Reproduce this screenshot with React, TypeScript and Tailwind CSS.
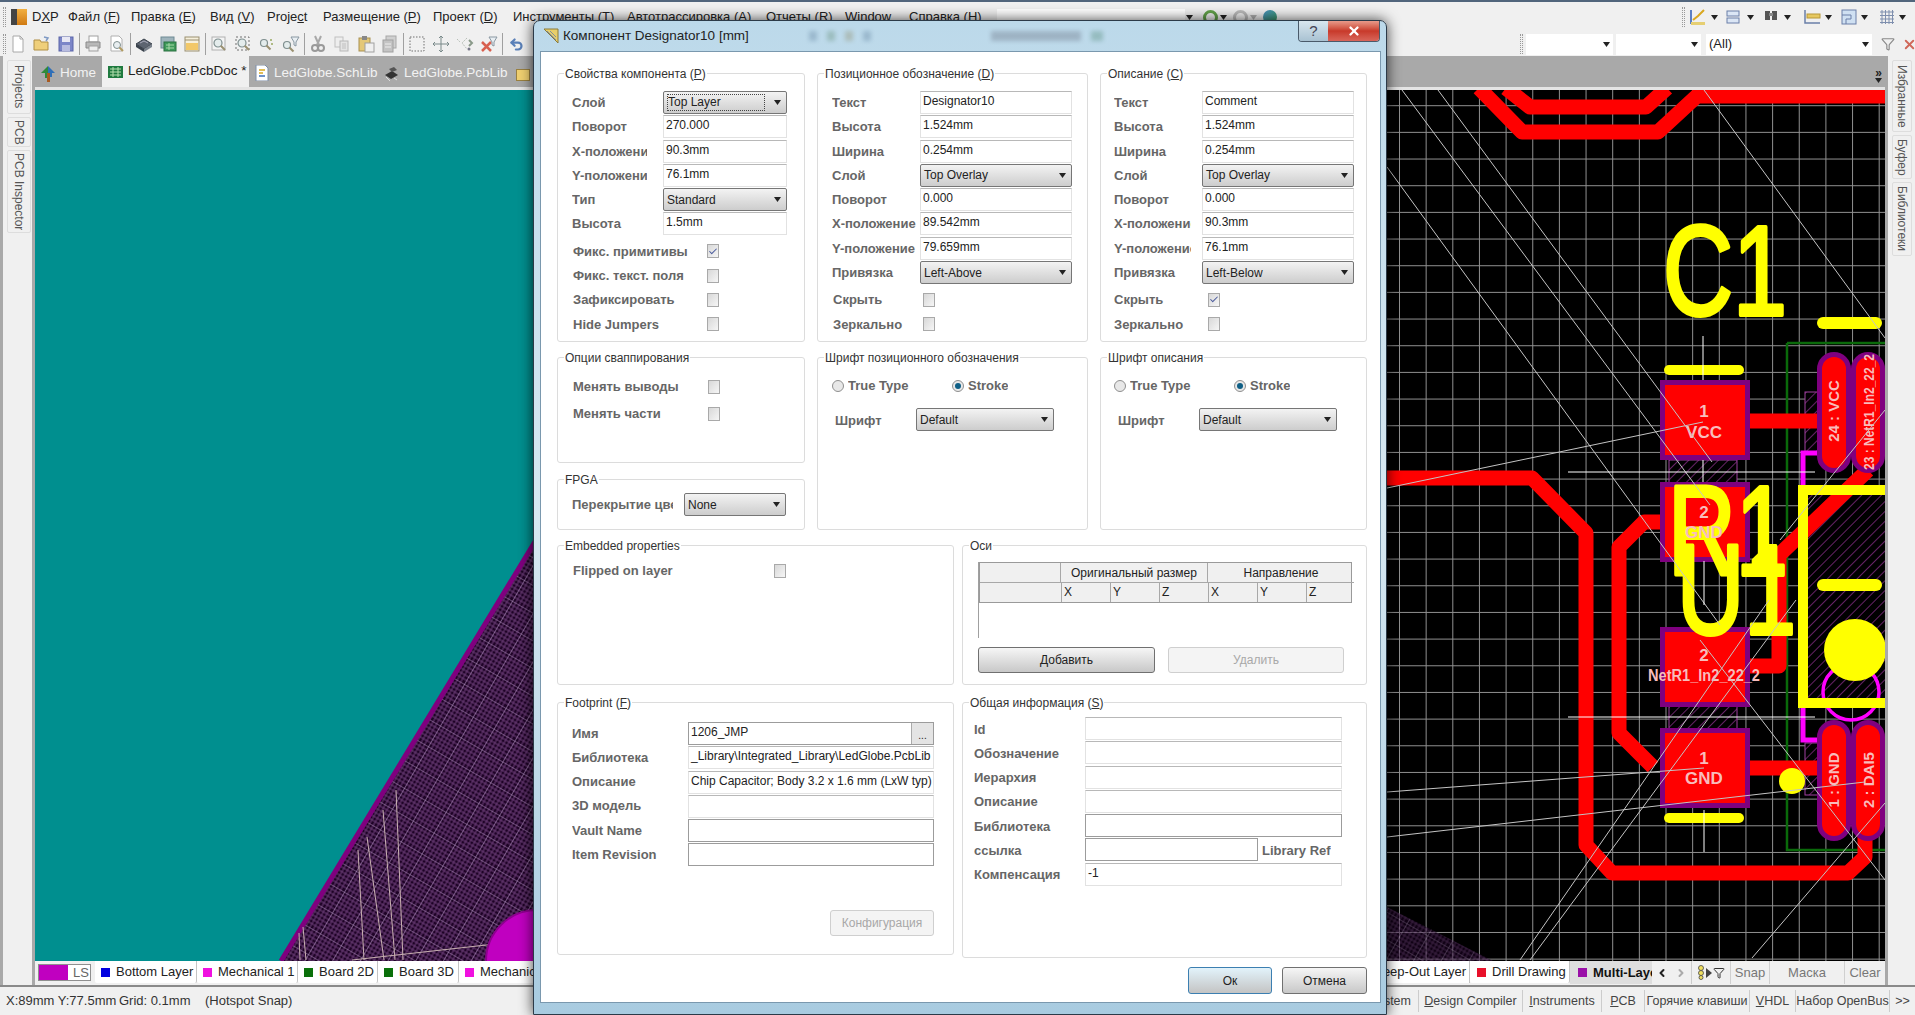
import React from 'react';
import { Check, ChevronRight, ChevronLeft, Filter, Undo2, X } from 'lucide-react';

const Arrow = ({ className = '' }: { className?: string }) => (
  <svg width="7" height="5" viewBox="0 0 7 5" className={className}>
    <polygon points="0,0 7,0 3.5,5" fill="#222" />
  </svg>
);

const Grip = () => <div className="h-[20px] w-[3px] shrink-0 border-x border-dotted border-[#999]" />;
const Sep = () => <div className="mx-px h-[22px] w-px shrink-0 bg-[#a0a0a0]" />;

const Tool = ({ children }: { children: React.ReactNode }) => (
  <div className="flex h-[22px] w-[24px] shrink-0 items-center justify-center">
    <svg width="18" height="18" viewBox="0 0 18 18">{children}</svg>
  </div>
);

const Lens = ({ x = 8, y = 8, r = 4 }: { x?: number; y?: number; r?: number }) => (
  <>
    <circle cx={x} cy={y} r={r} fill="#e4ecec" stroke="#7f8f8f" strokeWidth="1.2" />
    <path d={`M${x + r * 0.7} ${y + r * 0.7}L${x + r + 3} ${y + r + 3}`} stroke="#9a9070" strokeWidth="2" />
  </>
);

const Funnel = ({ x = 9 }: { x?: number }) => (
  <polygon points={`${x},2 ${x + 8},2 ${x + 5},7 ${x + 5},11 ${x + 3},10 ${x + 3},7`} fill="#e8eef2" stroke="#8a98a2" strokeWidth="1" />
);

const menu = [
  { w: 'w-[36px]', t: 'D', u: 'X', r: 'P' },
  { w: 'w-[63px]', t: 'Файл (', u: 'F', r: ')' },
  { w: 'w-[79px]', t: 'Правка (', u: 'E', r: ')' },
  { w: 'w-[57px]', t: 'Вид (', u: 'V', r: ')' },
  { w: 'w-[56px]', t: 'Proje', u: 'c', r: 't' },
  { w: 'w-[110px]', t: 'Размещение (', u: 'P', r: ')' },
  { w: 'w-[80px]', t: 'Проект (', u: 'D', r: ')' },
  { w: 'w-[114px]', t: 'Инструменты (', u: 'T', r: ')' },
  { w: 'w-[139px]', t: 'Автотрассировка (', u: 'A', r: ')' },
  { w: 'w-[79px]', t: 'Отчеты (', u: 'R', r: ')' },
  { w: 'w-[64px]', t: 'Window', u: '', r: '' },
  { w: 'w-[88px]', t: 'Справка (', u: 'H', r: ')' },
];

function PcbCanvas() {
  const vLines = Array.from({ length: 19 }, (_, i) => 1399.5 + i * 26.65);
  const hLines = Array.from({ length: 33 }, (_, i) => 105.7 + i * 26.67);
  const thin = [
    [1402, 90, 1710, 505], [1438, 90, 1712, 462], [1704, 90, 1885, 338], [1387, 167, 1720, 625],
    [1387, 488, 1703, 422], [1387, 792, 1704, 768], [1387, 837, 1865, 782], [1520, 960, 1769, 600],
    [1530, 960, 1796, 600], [1752, 958, 1885, 803], [1700, 640, 1885, 880], [1885, 410, 1780, 540],
  ];
  const leftThin = [
    [396, 790, 403, 960], [383, 810, 395, 960], [367, 837, 384, 960], [358, 850, 364, 960],
    [299, 933, 300, 960], [303, 927, 306, 960], [352, 960, 531, 940],
  ];
  return (
    <svg width="1850" height="871" viewBox="35 90 1850 871" className="block">
      <defs>
        <pattern id="board" width="24" height="24" patternUnits="userSpaceOnUse" patternTransform="rotate(30)">
          <rect width="24" height="24" fill="#1e0226" />
          <path d="M0 4H24M0 8H24M0 12H24M0 16H24M0 20H24M4 0V24M8 0V24M12 0V24M16 0V24M20 0V24" stroke="#6d3f7a" strokeWidth="1" />
          <path d="M0 0H24M0 0V24" stroke="#b18fc0" strokeWidth="1.2" />
        </pattern>
        <pattern id="hatch" width="7" height="7" patternUnits="userSpaceOnUse" patternTransform="rotate(45)">
          <rect width="7" height="7" fill="#000" />
          <path d="M0 0V7" stroke="#7f2a7f" strokeWidth="1.6" />
        </pattern>
      </defs>
      {/* left part, teal background and the board edge */}
      <rect x="35" y="90" width="520" height="871" fill="#008f8f" />
      <polygon points="281,961 536,540 536,961" fill="url(#board)" />
      <line x1="281" y1="961" x2="536" y2="540" stroke="#7f007f" strokeWidth="5" />
      {leftThin.map((l, i) => (
        <line key={i} x1={l[0]} y1={l[1]} x2={l[2]} y2={l[3]} stroke="#c8b0b0" strokeWidth="1" />
      ))}
      <circle cx="537" cy="961" r="51" fill="#c000c0" stroke="#8f008f" strokeWidth="2" />

      {/* right part, black with grid */}
      <rect x="1380" y="90" width="505" height="871" fill="#000" />
      {vLines.map((x) => (
        <line key={x} x1={x} y1="90" x2={x} y2="961" stroke="#909090" strokeWidth="1" />
      ))}
      {hLines.map((y) => (
        <line key={y} x1="1380" y1={y} x2="1885" y2={y} stroke="#909090" strokeWidth="1" />
      ))}
      <polygon points="1387,907 1493,961 1387,961" fill="url(#board)" opacity="0.55" />

      {/* hatched courtyards */}
      <rect x="1807" y="490" width="78" height="213" fill="url(#hatch)" />
      <rect x="1805" y="392" width="14" height="61" fill="url(#hatch)" stroke="#a040a0" />
      <rect x="1805" y="743" width="14" height="52" fill="url(#hatch)" stroke="#a040a0" />
      <rect x="1669" y="460" width="68" height="24" fill="url(#hatch)" stroke="#a040a0" />
      <rect x="1669" y="705" width="68" height="24" fill="url(#hatch)" stroke="#a040a0" />

      <path d="M1787 343H1885M1787 343V850H1885" fill="none" stroke="#0a6a0a" strokeWidth="2.5" />
      <path d="M1817 453H1803V740H1817" fill="none" stroke="#ff00ff" strokeWidth="5" />
      <circle cx="1851" cy="692" r="28" fill="none" stroke="#ff00ff" strokeWidth="3.5" />

      {/* copper */}
      <g fill="none" stroke="#ff0000" strokeWidth="15" strokeLinejoin="round">
        <path d="M1885 96H1697L1658 132H1522L1479 88" />
        <path d="M1506 88L1530 107H1646L1667 88" />
        <path d="M1380 478H1532L1586 533V845L1612 873H1848L1865 857V835" />
        <path d="M1663 522H1644L1619 547V733L1653 767" />
        <path d="M1750 666H1779V555L1868 470" />
        <path d="M1750 421H1825" />
        <path d="M1750 768H1825" />
      </g>
      {[380, 482, 627, 728].map((y) => (
        <rect key={y} x="1662.5" y={y + 2.5} width="85" height="75" fill="#ff0000" stroke="#7f007f" strokeWidth="5" />
      ))}
      {[
        [1817, 352], [1851, 352], [1817, 720], [1851, 720],
      ].map((p, i) => (
        <rect key={i} x={p[0] + 2.5} y={p[1] + 2.5} width="29" height="116" rx="14.5" fill="#ff0000" stroke="#7f007f" strokeWidth="5" />
      ))}

      {/* pad names */}
      <g fill="#f8bcbc" fontFamily="'Liberation Sans',sans-serif" fontWeight="700" textAnchor="middle">
        <text x="1704" y="417" fontSize="17">1</text>
        <text x="1704" y="438" fontSize="17">VCC</text>
        <text x="1704" y="661" fontSize="17">2</text>
        <text x="1704" y="681" fontSize="16" textLength="112" lengthAdjust="spacingAndGlyphs">NetR1_In2_22_2</text>
        <text x="1704" y="764" fontSize="17">1</text>
        <text x="1704" y="784" fontSize="17">GND</text>
        <text transform="translate(1839 411) rotate(-90)" fontSize="15">24 : VCC</text>
        <text transform="translate(1874 412) rotate(-90)" fontSize="14" textLength="116" lengthAdjust="spacingAndGlyphs">23 : NetR1_In2_22_2</text>
        <text transform="translate(1839 780) rotate(-90)" fontSize="15">1 : GND</text>
        <text transform="translate(1874 780) rotate(-90)" fontSize="15">2 : DAI5</text>
      </g>

      {/* overlay */}
      <g fill="none" stroke="#ffff00" strokeLinecap="round">
        <path d="M1669 370H1739" strokeWidth="10" />
        <path d="M1669 818H1739" strokeWidth="10" />
        <path d="M1823 323H1876" strokeWidth="12" />
        <path d="M1823 585H1876" strokeWidth="12" />
        <path d="M1885 490H1803V703H1885" strokeWidth="10" strokeLinecap="butt" />
      </g>
      <circle cx="1792" cy="781" r="13" fill="#ffff00" />
      <circle cx="1855" cy="650" r="31" fill="#ffff00" />
      <g fill="#ffff00" stroke="#ffff00" strokeWidth="4" strokeLinejoin="round" fontFamily="'Liberation Sans',sans-serif" fontSize="128">
        <text x="1663" y="315" textLength="124" lengthAdjust="spacingAndGlyphs">C1</text>
        <text x="1668" y="575" textLength="120" lengthAdjust="spacingAndGlyphs">R1</text>
        <text x="1677" y="634" textLength="119" lengthAdjust="spacingAndGlyphs">U1</text>
      </g>

      {/* the second pad's name shows through the open counter of the overlay letter */}
      <g fill="#f8bcbc" fontFamily="'Liberation Sans',sans-serif" fontWeight="700" textAnchor="middle" fontSize="17">
        <text x="1704" y="518">2</text>
        <text x="1704" y="538">GND</text>
      </g>

      {/* ratsnest and crosshairs */}
      {thin.map((l, i) => (
        <line key={i} x1={l[0]} y1={l[1]} x2={l[2]} y2={l[3]} stroke="#c4c4c4" strokeWidth="1" />
      ))}
      <path d="M1568 472H1815M1568 717H1815M1703 336V380M1703 460V482M1704 561V605M1704 810V852" stroke="#fff" strokeWidth="1" fill="none" />
    </svg>
  );
}

const Group = ({ title, className = '', children }: { title: React.ReactNode; className?: string; children?: React.ReactNode }) => (
  <div className={`relative rounded-[3px] border border-[#dcdcdc] ${className}`}>
    <span className="absolute left-[6px] top-[-8px] whitespace-nowrap bg-white px-px text-[12px] leading-[16px] text-[#333]">{title}</span>
    {children}
  </div>
);

const Label = ({ className = '', children }: { className?: string; children: React.ReactNode }) => (
  <div className={`shrink-0 overflow-hidden whitespace-nowrap text-[13px] font-bold leading-[23px] text-[#666] ${className}`}>{children}</div>
);

const Input = ({ className = '', value = '', strong = false, children }: { className?: string; value?: string; strong?: boolean; children?: React.ReactNode }) => (
  <div
    className={`flex h-[23px] shrink-0 items-center justify-between border pl-[2px] text-[12px] text-[#222] ${
      strong ? 'border-[#9c9c9c]' : 'border-[#e2e2e2] border-t-[#b8b8b8]'
    } ${className}`}
  >
    <span className="whitespace-nowrap pb-[3px]">{value}</span>
    {children}
  </div>
);

const Combo = ({ className = '', value, focus = false }: { className?: string; value: string; focus?: boolean }) => (
  <div className={`flex h-[23px] shrink-0 items-center justify-between rounded-[2px] border border-[#767676] bg-gradient-to-b from-[#f3f3f3] to-[#cdcdcd] pl-[3px] pr-[5px] text-[12px] text-[#222] ${className}`}>
    <span className={focus ? 'w-[98px] border border-dotted border-[#444] leading-[15px]' : ''}>{value}</span>
    <Arrow />
  </div>
);

const CheckBox = ({ checked = false, className = '' }: { checked?: boolean; className?: string }) => (
  <div className={`flex h-[14px] w-[12px] shrink-0 items-center justify-center border border-[#a9a9a9] bg-gradient-to-br from-[#d8d8d8] to-[#f6f6f6] ${className}`}>
    {checked && <Check size={11} strokeWidth={2.5} className="text-[#4a5a9c]" />}
  </div>
);

const Radio = ({ checked = false, className = '' }: { checked?: boolean; className?: string }) => (
  <div className={`flex h-[12px] w-[12px] shrink-0 items-center justify-center rounded-full border border-[#8f8f8f] bg-[#e8e8e8] ${className}`}>
    {checked && <div className="h-[6px] w-[6px] rounded-full bg-[#0f5f86]" />}
  </div>
);

const Btn = ({ className = '', disabled = false, children }: { className?: string; disabled?: boolean; children: React.ReactNode }) => (
  <div
    className={`flex items-center justify-center rounded-[3px] border text-[12px] ${
      disabled
        ? 'border-[#cfcfcf] bg-[#f4f4f4] text-[#a8a8a8]'
        : 'border-[#707070] bg-gradient-to-b from-[#f6f6f6] to-[#c8c8c8] text-[#222]'
    } ${className}`}
  >
    {children}
  </div>
);

const Row = ({ children, className = '' }: { children: React.ReactNode; className?: string }) => (
  <div className={`flex h-[23px] items-center ${className}`}>{children}</div>
);

function Dialog() {
  return (
    <div className="absolute left-[533px] top-[20px] h-[995px] w-[854px] rounded-t-[7px] border border-[#2c3a48] bg-gradient-to-b from-[#bcd9ea] via-[#d7e8f1] to-[#a8cbe0] shadow-[0_0_14px_rgba(0,0,0,0.75)]">
      {/* title bar */}
      <div className="relative flex h-[30px] items-center pl-[9px]">
        <svg width="16" height="16" viewBox="0 0 16 16">
          <polygon points="1,1 15,1 15,15" fill="#e8cf6a" stroke="#8a7a3a" strokeWidth="1" />
          <path d="M4 3L13 12M7 3L13 9" stroke="#7f8f9f" strokeWidth="1" />
        </svg>
        <span className="ml-[4px] text-[13.5px] text-[#222]">Компонент Designator10 [mm]</span>
        <div className="ml-[60px] flex items-center gap-[10px] opacity-25 blur-[2px]">
          <div className="h-[10px] w-[8px] bg-[#36597a]" />
          <div className="h-[10px] w-[8px] bg-[#3a6a40]" />
          <div className="h-[10px] w-[8px] bg-[#7a6a30]" />
          <div className="h-[10px] w-[8px] bg-[#36597a]" />
          <div className="ml-[110px] h-[10px] w-[90px] bg-[#445]" />
          <div className="h-[10px] w-[12px] bg-[#264]" />
        </div>
        <div className="absolute right-[6px] top-0 flex h-[21px] overflow-hidden rounded-b-[4px] border border-t-0 border-[#4a5a6a]">
          <div className="flex w-[29px] items-center justify-center bg-gradient-to-b from-[#d8e6ee] to-[#a9c2d2] text-[15px] text-[#445]">?</div>
          <div className="flex w-[51px] items-center justify-center bg-gradient-to-b from-[#e89a8a] via-[#c8392a] to-[#d8655a]">
            <X size={14} strokeWidth={4} className="text-white" />
          </div>
        </div>
      </div>

      {/* client area */}
      <div className="ml-[6px] h-[952px] w-[841px] border border-[#7a98ae] bg-white pl-[16px] pt-[21px]">
        <div className="grid grid-cols-[248px_271px_267px] gap-x-[12px]">
          <Group title={<>Свойства компонента (<u>P</u>)</>} className="h-[269px] pl-[14px] pt-[17px]">
            <div className="flex flex-col gap-[1.3px]">
              <Row><Label className="w-[91px]">Слой</Label><Combo className="w-[124px]" value="Top Layer" focus /></Row>
              <Row><Label className="w-[91px]">Поворот</Label><Input className="w-[124px]" value="270.000" /></Row>
              <Row><Label className="mr-[16px] w-[75px]">X-положение</Label><Input className="w-[124px]" value="90.3mm" /></Row>
              <Row><Label className="mr-[16px] w-[75px]">Y-положение</Label><Input className="w-[124px]" value="76.1mm" /></Row>
              <Row><Label className="w-[91px]">Тип</Label><Combo className="w-[124px]" value="Standard" /></Row>
              <Row><Label className="w-[91px]">Высота</Label><Input className="w-[124px]" value="1.5mm" /></Row>
              <Row className="mt-[3px]"><Label className="w-[135px] pl-px">Фикс. примитивы</Label><CheckBox checked /></Row>
              <Row><Label className="w-[135px] pl-px">Фикс. текст. поля</Label><CheckBox /></Row>
              <Row><Label className="w-[135px] pl-px">Зафиксировать</Label><CheckBox /></Row>
              <Row><Label className="w-[135px] pl-px">Hide Jumpers</Label><CheckBox /></Row>
            </div>
          </Group>

          <Group title={<>Позиционное обозначение (<u>D</u>)</>} className="h-[269px] pl-[14px] pt-[17px]">
            <div className="flex flex-col gap-[1.3px]">
              <Row><Label className="w-[88px]">Текст</Label><Input className="w-[152px]" value="Designator10" /></Row>
              <Row><Label className="w-[88px]">Высота</Label><Input className="w-[152px]" value="1.524mm" /></Row>
              <Row><Label className="w-[88px]">Ширина</Label><Input className="w-[152px]" value="0.254mm" /></Row>
              <Row><Label className="w-[88px]">Слой</Label><Combo className="w-[152px]" value="Top Overlay" /></Row>
              <Row><Label className="w-[88px]">Поворот</Label><Input className="w-[152px]" value="0.000" /></Row>
              <Row><Label className="w-[88px]">X-положение</Label><Input className="w-[152px]" value="89.542mm" /></Row>
              <Row><Label className="w-[88px]">Y-положение</Label><Input className="w-[152px]" value="79.659mm" /></Row>
              <Row><Label className="w-[88px]">Привязка</Label><Combo className="w-[152px]" value="Left-Above" /></Row>
              <Row className="mt-[3px]"><Label className="w-[91px] pl-px">Скрыть</Label><CheckBox /></Row>
              <Row><Label className="w-[91px] pl-px">Зеркально</Label><CheckBox /></Row>
            </div>
          </Group>

          <Group title={<>Описание (<u>C</u>)</>} className="h-[269px] pl-[13px] pt-[17px]">
            <div className="flex flex-col gap-[1.3px]">
              <Row><Label className="w-[88px]">Текст</Label><Input className="w-[152px]" value="Comment" /></Row>
              <Row><Label className="w-[88px]">Высота</Label><Input className="w-[152px]" value="1.524mm" /></Row>
              <Row><Label className="w-[88px]">Ширина</Label><Input className="w-[152px]" value="0.254mm" /></Row>
              <Row><Label className="w-[88px]">Слой</Label><Combo className="w-[152px]" value="Top Overlay" /></Row>
              <Row><Label className="w-[88px]">Поворот</Label><Input className="w-[152px]" value="0.000" /></Row>
              <Row><Label className="mr-[11px] w-[77px]">X-положение</Label><Input className="w-[152px]" value="90.3mm" /></Row>
              <Row><Label className="mr-[11px] w-[77px]">Y-положение</Label><Input className="w-[152px]" value="76.1mm" /></Row>
              <Row><Label className="w-[88px]">Привязка</Label><Combo className="w-[152px]" value="Left-Below" /></Row>
              <Row className="mt-[3px]"><Label className="w-[94px]">Скрыть</Label><CheckBox checked /></Row>
              <Row><Label className="w-[94px]">Зеркально</Label><CheckBox /></Row>
            </div>
          </Group>
        </div>

        <div className="mt-[15px] grid grid-cols-[248px_271px_267px] gap-x-[12px]">
          <div className="flex flex-col gap-[16px]">
            <Group title="Опции сваппирования" className="h-[106px] pl-[15px] pt-[17px]">
              <Row><Label className="w-[135px]">Менять выводы</Label><CheckBox /></Row>
              <Row className="mt-[4px]"><Label className="w-[135px]">Менять части</Label><CheckBox /></Row>
            </Group>
            <Group title="FPGA" className="h-[51px] pl-[14px] pt-[13px]">
              <Row><Label className="mr-[11px] w-[101px]">Перекрытие цвета</Label><Combo className="w-[102px]" value="None" /></Row>
            </Group>
          </div>

          <Group title="Шрифт позиционного обозначения" className="h-[173px] pl-[14px] pt-[16px]">
            <Row>
              <Radio />
              <Label className="ml-[4px] w-[104px]">True Type</Label>
              <Radio checked />
              <Label className="ml-[4px]">Stroke</Label>
            </Row>
            <Row className="mt-[11px]">
              <Label className="w-[84px] pl-[3px] pt-[2px]">Шрифт</Label>
              <Combo className="w-[138px]" value="Default" />
            </Row>
          </Group>

          <Group title="Шрифт описания" className="h-[173px] pl-[13px] pt-[16px]">
            <Row>
              <Radio />
              <Label className="ml-[4px] w-[104px]">True Type</Label>
              <Radio checked />
              <Label className="ml-[4px]">Stroke</Label>
            </Row>
            <Row className="mt-[11px]">
              <Label className="w-[85px] pl-[4px] pt-[2px]">Шрифт</Label>
              <Combo className="w-[138px]" value="Default" />
            </Row>
          </Group>
        </div>

        <div className="mt-[15px] grid grid-cols-[397px_405px] gap-x-[8px]">
          <Group title="Embedded properties" className="h-[140px] pl-[15px] pt-[13px]">
            <Row><Label className="w-[201px]">Flipped on layer</Label><CheckBox /></Row>
          </Group>
          <Group title="Оси" className="h-[140px] pl-[15px] pt-[16px]">
            <div className="h-[76px] w-[374px] border-l border-[#a0a0a0]">
              <div className="grid grid-cols-[81px_49px_49px_49px_49px_49px_48px] border border-[#9a9a9a] bg-[#f0f0f0] text-[12px] text-[#222]">
                <div className="h-[20px] border-b border-r border-[#a8a8a8]" />
                <div className="col-span-3 h-[20px] border-b border-r border-[#a8a8a8] text-center leading-[20px]">Оригинальный размер</div>
                <div className="col-span-3 h-[20px] border-b border-[#a8a8a8] text-center leading-[20px]">Направление</div>
                <div className="h-[19px]" />
                {['X', 'Y', 'Z', 'X', 'Y', 'Z'].map((c, i) => (
                  <div key={i} className="h-[19px] border-l border-[#a8a8a8] pl-[2px] leading-[19px]">{c}</div>
                ))}
              </div>
            </div>
            <div className="mt-[9px] flex gap-[13px]">
              <Btn className="h-[26px] w-[177px]">Добавить</Btn>
              <Btn className="h-[26px] w-[176px]" disabled>Удалить</Btn>
            </div>
          </Group>
        </div>

        <div className="mt-[17px] grid grid-cols-[397px_405px] items-start gap-x-[8px]">
          <Group title={<>Footprint (<u>F</u>)</>} className="h-[253px] pl-[14px] pt-[19px]">
            <div className="flex flex-col gap-[1.3px]">
              <Row>
                <Label className="w-[116px] pb-px leading-[22px]">Имя</Label>
                <Input className="w-[246px]" value="1206_JMP" strong>
                  <div className="flex h-full w-[22px] items-end justify-center border-l border-[#aaa] bg-[#e4e4e4] pb-[3px] text-[10px] leading-none">...</div>
                </Input>
              </Row>
              <Row><Label className="w-[116px] pb-px leading-[22px]">Библиотека</Label><Input className="w-[246px]" value="_Library\Integrated_Library\LedGlobe.PcbLib" /></Row>
              <Row><Label className="w-[116px] pb-px leading-[22px]">Описание</Label><Input className="w-[246px]" value="Chip Capacitor; Body 3.2 x 1.6 mm (LxW typ)" /></Row>
              <Row><Label className="w-[116px] pb-px leading-[22px]">3D модель</Label><Input className="w-[246px]" /></Row>
              <Row><Label className="w-[116px]">Vault Name</Label><Input className="w-[246px]" strong /></Row>
              <Row><Label className="w-[116px]">Item Revision</Label><Input className="w-[246px]" strong /></Row>
            </div>
            <Btn className="ml-[258px] mt-[44px] h-[26px] w-[104px]" disabled>Конфигурация</Btn>
          </Group>
          <Group title={<>Общая информация (<u>S</u>)</>} className="h-[256px] pl-[11px] pt-[14px]">
            <div className="flex flex-col gap-[1.3px]">
              <Row><Label className="w-[111px] pt-px">Id</Label><Input className="w-[257px]" /></Row>
              <Row><Label className="w-[111px] pt-px">Обозначение</Label><Input className="w-[257px]" /></Row>
              <Row><Label className="w-[111px] pt-px">Иерархия</Label><Input className="w-[257px]" /></Row>
              <Row><Label className="w-[111px] pt-px">Описание</Label><Input className="w-[257px]" /></Row>
              <Row><Label className="w-[111px] pt-px">Библиотека</Label><Input className="w-[257px]" strong /></Row>
              <Row>
                <Label className="w-[111px] pt-px">ссылка</Label>
                <Input className="w-[173px]" strong />
                <Label className="ml-[4px] pt-px">Library Ref</Label>
              </Row>
              <Row><Label className="w-[111px]">Компенсация</Label><Input className="w-[257px]" value="-1" /></Row>
            </div>
          </Group>
        </div>

        <div className="mt-[9px] flex w-[810px] justify-end gap-[10px]">
          <div className="flex h-[27px] w-[84px] items-center justify-center rounded-[3px] border border-[#3c7fb1] bg-gradient-to-b from-[#e2f3fb] to-[#c4c4c4] text-[12px] text-[#222]">Ок</div>
          <Btn className="h-[27px] w-[85px]">Отмена</Btn>
        </div>
      </div>
    </div>
  );
}

const LayerTab = ({ color, label, className = '' }: { color: string; label: string; className?: string }) => (
  <div className={`flex h-[22px] shrink-0 items-center overflow-hidden whitespace-nowrap rounded-b-[2px] border-r border-[#c4c4c4] bg-white pl-[6px] text-[13px] text-[#222] ${className}`}>
    <div className={`mr-[6px] h-[9px] w-[9px] shrink-0 ${color}`} />
    {label}
  </div>
);

const BarBtn = ({ className = '', children }: { className?: string; children: React.ReactNode }) => (
  <div className={`flex h-full shrink-0 items-center justify-center border-l border-[#d0d0d0] text-[13px] ${className}`}>{children}</div>
);

export default function App() {
  return (
    <div className="relative flex h-[1015px] w-[1915px] flex-col overflow-hidden bg-[#f0f0f0] font-['Liberation_Sans',sans-serif]">
      <div className="h-[2px] shrink-0 bg-[#51657c]" />

      {/* menu */}
      <div className="flex h-[30px] shrink-0 items-center pl-[3px]">
        <Grip />
        <div className="ml-[5px] mr-[5px] flex h-[16px] w-[16px] shrink-0">
          <div className="w-[6px] bg-[#444]" />
          <div className="w-[10px] bg-gradient-to-b from-[#f2b040] to-[#d07a10]" />
        </div>
        {menu.map((m) => (
          <div key={m.t} className={`${m.w} shrink-0 whitespace-nowrap text-[13px] text-[#222]`}>
            {m.t}<u>{m.u}</u>{m.r}
          </div>
        ))}
        <div className="h-[17px] w-[188px] shrink-0 bg-white" />
        <Arrow className="ml-[1px]" />
        <div className="ml-[10px] h-[15px] w-[15px] rounded-full border-[3px] border-[#62a14a]" />
        <Arrow className="ml-[2px]" />
        <div className="ml-[6px] h-[15px] w-[15px] rounded-full border-[3px] border-[#bbb]" />
        <Arrow className="ml-[2px] opacity-30" />
        <div className="ml-[6px] h-[14px] w-[14px] rounded-full bg-gradient-to-br from-[#4a90c0] to-[#3f9a5a]" />
        <div className="ml-[405px]"><Grip /></div>
        <div className="ml-[4px] flex w-[37px] shrink-0 items-center gap-[4px]">
          <svg width="18" height="18" viewBox="0 0 18 18">
            <path d="M2 2V15H16" fill="none" stroke="#5b7fc4" strokeWidth="2" />
            <path d="M4 12L9 8L15 2" fill="none" stroke="#d9a820" strokeWidth="2" />
            <rect x="2" y="14" width="14" height="3" fill="#e6cf72" />
          </svg>
          <Arrow />
        </div>
        <div className="flex w-[38px] shrink-0 items-center gap-[6px]">
          <svg width="15" height="16" viewBox="0 0 15 16">
            <rect x="1" y="2" width="12" height="5" fill="#dbe6f5" stroke="#6a7fa8" />
            <rect x="1" y="9" width="12" height="5" fill="#dbe6f5" stroke="#6a7fa8" />
          </svg>
          <Arrow />
        </div>
        <div className="flex w-[39px] shrink-0 items-center gap-[6px]">
          <svg width="14" height="16" viewBox="0 0 14 16">
            <rect x="1" y="2" width="5" height="9" fill="#555" />
            <rect x="8" y="2" width="5" height="9" fill="#555" />
            <rect x="5" y="4" width="4" height="3" fill="#888" />
          </svg>
          <Arrow />
        </div>
        <div className="flex w-[38px] shrink-0 items-center gap-[4px]">
          <svg width="18" height="16" viewBox="0 0 18 16">
            <path d="M2 1V14H17" fill="none" stroke="#6a7fa8" strokeWidth="1.5" />
            <rect x="4" y="5" width="13" height="4" fill="#e6c860" stroke="#b89838" />
          </svg>
          <Arrow />
        </div>
        <div className="flex w-[38px] shrink-0 items-center gap-[4px]">
          <svg width="16" height="16" viewBox="0 0 16 16">
            <rect x="1" y="1" width="14" height="14" fill="#cfe0f2" stroke="#6a7fa8" />
            <path d="M1 6H10V10H5V15" fill="none" stroke="#6a7fa8" />
          </svg>
          <Arrow />
        </div>
        <div className="flex shrink-0 items-center gap-[4px]">
          <svg width="16" height="16" viewBox="0 0 16 16">
            <path d="M1 3H15M1 6.5H15M1 10H15M1 13.5H15M3 1V15M6.5 1V15M10 1V15M13.5 1V15" stroke="#7f8fae" strokeWidth="1" />
          </svg>
          <Arrow />
        </div>
      </div>

      {/* toolbar */}
      <div className="flex h-[24px] shrink-0 items-center pl-[3px]">
        <Grip />
        <Tool><path d="M4 1H11L14 4V17H4Z" fill="#fff" stroke="#a8a8a8" /><path d="M11 1V4H14" fill="none" stroke="#a8a8a8" /></Tool>
        <Tool><path d="M1 5H7L8 7H15V15H1Z" fill="#efcf7a" stroke="#b08f45" /><path d="M11 2L15 3L13 6" fill="none" stroke="#7f9ac4" strokeWidth="1.5" /></Tool>
        <Tool><rect x="2" y="2" width="14" height="14" fill="#7c86c8" stroke="#5a64a8" /><rect x="5" y="2" width="8" height="5" fill="#e8e8f4" /><rect x="5" y="10" width="8" height="6" fill="#b8bce0" /></Tool>
        <Sep />
        <Tool><rect x="5" y="1" width="9" height="6" fill="#fff" stroke="#a0a0a0" /><path d="M2 7H16V13H2Z" fill="#b8b8b8" stroke="#8a8a8a" /><rect x="5" y="11" width="9" height="5" fill="#eee" stroke="#a0a0a0" /></Tool>
        <Tool><path d="M3 1H11L14 4V16H3Z" fill="#fff" stroke="#b0b0b0" /><circle cx="9" cy="10" r="3.5" fill="#e8eef0" stroke="#7f8f8f" /><path d="M11.5 12.5L15 16" stroke="#b09a60" strokeWidth="2" /></Tool>
        <Sep />
        <Tool><polygon points="1,9 9,4 17,9 9,14" fill="#5c6470" stroke="#3a424c" /><polygon points="1,9 9,14 9,17 1,12" fill="#3a424c" /><polygon points="17,9 9,14 9,17 17,12" fill="#7a828c" /><path d="M5 8L9 6L13 8" stroke="#aab" fill="none" /></Tool>
        <Tool><rect x="2" y="2" width="13" height="11" fill="#9fb4bc" stroke="#6f8a94" /><rect x="5" y="7" width="12" height="9" fill="#3f9a5a" stroke="#2a7040" /><path d="M7 10H15M7 13H15M10 8V15" stroke="#a8d8a8" /></Tool>
        <Tool><rect x="2" y="2" width="14" height="14" fill="#f6f0dc" stroke="#9a8f70" /><path d="M2 5H16" stroke="#9a8f70" /><rect x="3" y="8" width="12" height="7" fill="#f2c868" /></Tool>
        <Sep />
        <Tool><rect x="2" y="2" width="13" height="13" fill="#f4f4f4" stroke="#b0b0b0" /><Lens x={8} y={8} r={4} /></Tool>
        <Tool><rect x="2" y="2" width="13" height="13" fill="none" stroke="#707070" strokeDasharray="2 2" /><Lens x={8} y={8} r={4} /></Tool>
        <Tool><Lens x={6} y={8} r={3.5} /><circle cx="13" cy="5" r="1" fill="#98a860" /><circle cx="14" cy="9" r="1" fill="#98a860" /></Tool>
        <Tool><Lens x={5} y={10} r={3.5} /><Funnel x={9} /></Tool>
        <Sep />
        <Tool><path d="M6 1L10 10M12 1L8 10" stroke="#a8a8a8" strokeWidth="2" /><circle cx="6" cy="13" r="3" fill="none" stroke="#999" strokeWidth="2" /><circle cx="12" cy="13" r="3" fill="none" stroke="#999" strokeWidth="2" /></Tool>
        <Tool><rect x="2" y="2" width="8" height="10" fill="#eee" stroke="#c0c0c0" /><rect x="7" y="6" width="8" height="10" fill="#e4e4e4" stroke="#b8b8b8" /><path d="M9 9H13M9 11H13M9 13H13" stroke="#c0c0c0" /></Tool>
        <Tool><rect x="2" y="3" width="11" height="13" fill="#e4c878" stroke="#a89050" /><rect x="5" y="1" width="5" height="4" fill="#888" /><rect x="8" y="8" width="9" height="9" fill="#f0f0f0" stroke="#a0a0a0" /></Tool>
        <Tool><rect x="5" y="1" width="10" height="12" fill="#d0d0d0" stroke="#a8a8a8" /><rect x="2" y="5" width="10" height="12" fill="#c4c4c4" stroke="#a0a0a0" /><path d="M4 9H10M4 12H10" stroke="#eee" /></Tool>
        <Sep />
        <Tool><rect x="2" y="2" width="14" height="14" fill="none" stroke="#707070" strokeDasharray="1.5 1.5" /></Tool>
        <Tool><path d="M9 1V17M1 9H17M9 1L7 3M9 1L11 3M9 17L7 15M9 17L11 15M1 9L3 7M1 9L3 11M17 9L15 7M17 9L15 11" stroke="#7a8a8a" fill="none" /></Tool>
        <Tool><path d="M1 4L4 7M11 3L6 8L11 14" stroke="#b8c0b8" fill="none" strokeDasharray="2 1" /><path d="M13 5L16 8L13 11" stroke="#8a9a8a" strokeWidth="2" fill="none" /><circle cx="13" cy="14" r="1.5" fill="#778" /></Tool>
        <Tool><path d="M2 7L11 16M11 7L2 16" stroke="#d8604f" strokeWidth="2.5" /><Funnel x={9} /></Tool>
        <Sep />
        <div className="flex h-[22px] w-[24px] shrink-0 items-center justify-center"><Undo2 size={15} strokeWidth={3.5} className="text-[#5a80b8]" /></div>
        <div className="flex h-[22px] w-[24px] shrink-0 items-center justify-center"><Undo2 size={15} strokeWidth={3} className="text-[#bbb]" /></div>

        <div className="ml-auto flex items-center">
          <Grip />
          <div className="ml-[3px] flex h-[21px] w-[87px] items-center justify-end bg-white pr-[3px]"><Arrow /></div>
          <div className="ml-[3px] flex h-[21px] w-[85px] items-center justify-end bg-white pr-[3px]"><Arrow /></div>
          <div className="ml-[5px] flex h-[21px] w-[166px] items-center justify-between bg-white pl-[3px] pr-[3px] text-[13px] text-[#222]">(All)<Arrow /></div>
          <div className="ml-[9px] w-[21px]"><Filter size={14} className="text-[#888]" /></div>
          <div className="w-[13px] overflow-hidden"><X size={15} strokeWidth={3} className="text-[#d0685a]" /></div>
        </div>
      </div>

      <div className="flex min-h-0 flex-1 bg-[#a9a9a9] pl-[3px]">
        {/* left panel tabs */}
        <div className="flex w-[29px] shrink-0 flex-col gap-[3px] bg-[#f0f0f0] pl-[4px] pr-[1px] pt-[4px] text-[12px] text-[#555]">
          <div className="flex h-[54px] items-center justify-center rounded-[2px] border border-[#ddd] [writing-mode:vertical-rl]">Projects</div>
          <div className="flex h-[30px] items-center justify-center rounded-[2px] border border-[#ddd] [writing-mode:vertical-rl]">PCB</div>
          <div className="flex h-[83px] items-center justify-center rounded-[2px] border border-[#ddd] [writing-mode:vertical-rl]">PCB Inspector</div>
        </div>

        <div className="ml-[3px] flex w-[1850px] shrink-0 flex-col">
          {/* document tabs */}
          <div className="flex h-[34px] shrink-0 items-end whitespace-nowrap border-b-[3px] border-[#e4e4e4] text-[13.5px] text-[#f2f2f2]">
            <div className="flex h-[28px] w-[67px] items-center pl-[5px]">
              <svg width="16" height="17" viewBox="0 0 16 17" className="mr-[4px] shrink-0">
                <rect x="7" y="8" width="3" height="9" fill="#a85a20" />
                <polygon points="1,8 8,1 8,8" fill="#2f8a3a" />
                <polygon points="8,1 15,8 8,8" fill="#2f6fb8" />
                <rect x="5" y="8" width="2" height="5" fill="#2f8a3a" />
                <rect x="10" y="8" width="2" height="4" fill="#2f6fb8" />
              </svg>
              Home
            </div>
            <div className="flex h-[31px] w-[147px] items-center bg-[#f0f0f0] pl-[6px] text-[#222]">
              <svg width="15" height="12" viewBox="0 0 15 12" className="mr-[5px] shrink-0">
                <rect width="15" height="12" fill="#1f7a3f" />
                <path d="M2 3H13M2 6H13M2 9H13M5 1V11M10 1V11" stroke="#b8e0b0" strokeWidth="1" />
              </svg>
              LedGlobe.PcbDoc *
            </div>
            <div className="flex h-[28px] w-[128px] items-center pl-[6px]">
              <svg width="14" height="16" viewBox="0 0 14 16" className="mr-[5px] shrink-0">
                <path d="M1 0H10L13 3V16H1Z" fill="#fff" stroke="#7f8fa8" />
                <path d="M4 5H10M4 8H8" stroke="#d9a820" strokeWidth="1.5" />
                <path d="M4 11H10" stroke="#3f6fb8" strokeWidth="1.5" />
              </svg>
              LedGlobe.SchLib
            </div>
            <div className="flex h-[28px] w-[139px] items-center pl-[7px]">
              <svg width="15" height="15" viewBox="0 0 15 15" className="mr-[5px] shrink-0">
                <polygon points="1,9 8,5 14,9 7,13" fill="#333" />
                <polygon points="5,3 10,1 13,4 8,6" fill="#555" />
                <path d="M2 11L6 15M10 12L13 14" stroke="#ddd" />
              </svg>
              LedGlobe.PcbLib
            </div>
            <div className="mb-[6px] h-[12px] w-[14px] border border-[#9a8040] bg-[#f0d070]" />
            <div className="ml-auto mb-[4px] mr-[3px] flex flex-col items-center text-[12px] font-bold leading-[10px] text-[#222]">
              »
              <Arrow />
            </div>
          </div>

          <div className="flex h-[871px] shrink-0 flex-col">
            <PcbCanvas />
          </div>

          {/* layer tabs */}
          <div className="flex h-[24px] shrink-0 items-start justify-between bg-[#f0f0f0]">
            <div className="flex items-start">
              <div className="ml-[3px] mt-[3px] flex h-[17px] w-[53px] items-center border border-[#8f8f8f] bg-white">
                <div className="h-full w-[29px] bg-[#c000c0]" />
                <span className="ml-[5px] text-[13px] leading-none text-[#666]">LS</span>
              </div>
              <div className="ml-[4px] flex">
                <LayerTab color="bg-[#0000e0]" label="Bottom Layer" className="w-[102px]" />
                <LayerTab color="bg-[#f010e0]" label="Mechanical 1" className="w-[101px]" />
                <LayerTab color="bg-[#0a700a]" label="Board 2D" className="w-[80px]" />
                <LayerTab color="bg-[#0a700a]" label="Board 3D" className="w-[81px]" />
                <LayerTab color="bg-[#f010e0]" label="Mechanical 13" className="w-[100px]" />
              </div>
            </div>
            <div className="flex h-[23px] items-start">
              <div className="flex h-[22px] w-[110px] items-center justify-end whitespace-nowrap border-r border-[#c4c4c4] bg-white pr-[3px] text-[13px] text-[#222]">Keep-Out Layer</div>
              <LayerTab color="bg-[#e8102a]" label="Drill Drawing" className="w-[100px] pl-[7px]" />
              <div className="flex h-[23px] w-[82px] shrink-0 items-center overflow-hidden whitespace-nowrap bg-[#dedede] pl-[8px] text-[13px] font-bold text-[#111]">
                <div className="mr-[6px] h-[9px] w-[9px] shrink-0 bg-[#9a10a8]" />
                Multi-Layer
              </div>
              <div className="flex h-[23px] w-[40px] shrink-0 items-center justify-around border-r border-[#ccc] bg-[#f0f0f0]">
                <ChevronLeft size={12} strokeWidth={4} className="text-[#222]" />
                <ChevronRight size={12} strokeWidth={4} className="text-[#aaa]" />
              </div>
              <div className="flex h-[23px] w-[38px] shrink-0 items-center justify-center gap-[1px]">
                <svg width="8" height="15" viewBox="0 0 8 15">
                  <circle cx="4" cy="3" r="2.5" fill="#f0e060" stroke="#444" strokeWidth="0.8" />
                  <circle cx="4" cy="8" r="2.5" fill="#f0e060" stroke="#444" strokeWidth="0.8" />
                  <circle cx="4" cy="12.5" r="2" fill="#f0e060" stroke="#444" strokeWidth="0.8" />
                </svg>
                <svg width="6" height="10" viewBox="0 0 6 10"><polygon points="0,0 6,5 0,10" fill="#444" /></svg>
                <Filter size={12} className="text-[#333]" />
              </div>
              <BarBtn className="w-[39px] text-[#777]">Snap</BarBtn>
              <BarBtn className="w-[75px] text-[#777]">Маска</BarBtn>
              <BarBtn className="w-[41px] text-[#777]">Clear</BarBtn>
            </div>
          </div>
        </div>

        {/* right panel tabs */}
        <div className="ml-[3px] flex min-w-0 flex-1 flex-col gap-[3px] bg-[#f0f0f0] pl-[4px] pr-[3px] pt-[4px] text-[12px] text-[#555]">
          <div className="flex h-[72px] items-center justify-center rounded-[2px] border border-[#ddd] [writing-mode:vertical-rl]">Избранные</div>
          <div className="flex h-[44px] items-center justify-center rounded-[2px] border border-[#ddd] [writing-mode:vertical-rl]">Буфер</div>
          <div className="flex h-[74px] items-center justify-center rounded-[2px] border border-[#ddd] [writing-mode:vertical-rl]">Библиотеки</div>
        </div>
      </div>

      <div className="h-[2px] shrink-0 bg-[#8a8a8a]" />

      {/* status bar */}
      <div className="flex h-[28px] shrink-0 items-center justify-between whitespace-nowrap text-[13px] text-[#333]">
        <div className="flex pl-[6px]">
          <span className="w-[113px]">X:89mm Y:77.5mm</span>
          <span className="w-[86px]">Grid: 0.1mm</span>
          <span>(Hotspot Snap)</span>
        </div>
        <div className="flex h-[22px] items-center text-[12.5px] text-[#444]">
          <div className="flex h-full w-[100px] items-center justify-end border-r border-[#ccc] pr-[7px]">System</div>
          <div className="flex h-full w-[104px] items-center justify-center border-r border-[#ccc]"><span><u>D</u>esign Compiler</span></div>
          <div className="flex h-full w-[79px] items-center justify-center border-r border-[#ccc]"><span><u>I</u>nstruments</span></div>
          <div className="flex h-full w-[43px] items-center justify-center border-r border-[#ccc]"><span><u>P</u>CB</span></div>
          <div className="flex h-full w-[105px] items-center justify-center border-r border-[#ccc]">Горячие клавиши</div>
          <div className="flex h-full w-[46px] items-center justify-center border-r border-[#ccc]"><span><u>V</u>HDL</span></div>
          <div className="flex h-full w-[94px] items-center justify-center border-r border-[#ccc]">Набор OpenBus</div>
          <div className="flex h-full w-[25px] items-center justify-center">&gt;&gt;</div>
        </div>
      </div>

      <Dialog />
    </div>
  );
}
